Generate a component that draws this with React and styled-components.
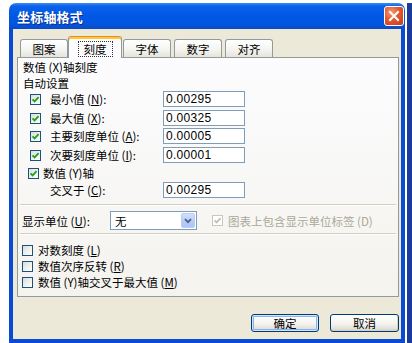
import React from 'react';
import styled, { createGlobalStyle } from 'styled-components';

const GlobalStyle = createGlobalStyle`
  html, body { margin: 0; padding: 0; background: #fff; }
  body {
    font-family: "Noto Sans CJK SC", "Liberation Sans", sans-serif;
    font-size: 11.5px;
    color: #000;
  }
  #root { width: 412px; height: 343px; overflow: hidden; }
`;

const Page = styled.div`
  display: flex;
  width: 412px;
  height: 343px;
  box-sizing: border-box;
  padding: 3px 0 0 9px;
  background: #fff;
`;

const Backdrop = styled.div`
  flex: 1;
  border-left: 2px solid #fff;
  background: #1a3b9b;
`;

const Window = styled.div`
  width: 396px;
  height: 340px;
  display: flex;
  flex-direction: column;
`;

const TitleBar = styled.div`
  height: 26px;
  flex: none;
  display: flex;
  align-items: center;
  justify-content: space-between;
  padding: 0 1px 0 8px;
  border-radius: 7px 7px 0 0;
  background: linear-gradient(
    to bottom,
    #3d8cf5 0%,
    #0b62ea 12%,
    #0058e6 45%,
    #0256df 80%,
    #0a4bc6 100%
  );
`;

const Title = styled.span`
  color: #fff;
  font-size: 13px;
  font-weight: 700;
  letter-spacing: 0.2px;
  text-shadow: 1px 1px 0 #0b2f8c;
`;

const CloseButton = styled.div`
  width: 20px;
  height: 20px;
  box-sizing: border-box;
  border: 1px solid #fff;
  border-radius: 3px;
  background: radial-gradient(circle at 35% 30%, #f09a78 0%, #e1592f 45%, #c5381a 100%);
  display: flex;
  align-items: center;
  justify-content: center;
`;

const Body = styled.div`
  flex: 1;
  display: flex;
  flex-direction: column;
  background: #ece9d8;
  border: 4px solid #0a4bd6;
  border-top: 0;
  padding: 7px 2px 0 4px;
`;

const TabStrip = styled.div`
  height: 21px;
  display: flex;
  align-items: flex-end;
  padding-left: 3px;
`;

const Tab = styled.div`
  position: relative;
  box-sizing: border-box;
  width: ${p => (p.$active ? 54 : 48)}px;
  height: ${p => (p.$active ? 22 : 18)}px;
  margin: ${p => (p.$active ? '0 1px -1px -3px' : '0 3px 0 0')};
  z-index: ${p => (p.$active ? 2 : 1)};
  border: 1px solid #919b9c;
  border-bottom: 0;
  border-top: 1px solid ${p => (p.$active ? '#e68b2c' : '#919b9c')};
  border-radius: 3px 3px 0 0;
  background: ${p =>
    p.$active ? '#fcfcfe' : 'linear-gradient(to bottom, #ffffff 0%, #f3f3ef 60%, #e6e4da 100%)'};
  box-shadow: ${p => (p.$active ? 'inset 0 2px 0 #ffc83c' : 'none')};
  display: flex;
  align-items: center;
  justify-content: center;
  padding-top: ${p => (p.$active ? 2 : 1)}px;
`;

const FocusLabel = styled.span`
  outline: 1px dotted #333;
  outline-offset: 0;
  padding: 0 5px;
  line-height: 14px;
`;

const Panel = styled.div`
  height: 240px;
  box-sizing: border-box;
  border: 1px solid #919b9c;
  background: linear-gradient(to bottom, #fcfcfe 0%, #f4f3ee 100%);
  padding: 1px 2px 0 4px;
  display: flex;
  flex-direction: column;
`;

const Heading = styled.div`
  line-height: 16px;
  height: 16px;
  padding-left: 1px;
`;

const FieldRow = styled.div`
  display: grid;
  grid-template-columns: 28px 113px 82px;
  align-items: center;
  height: 16px;
  margin-top: ${p => p.$gap || 0}px;
`;

const CheckCell = styled.div`
  justify-self: end;
  margin-right: 9px;
  display: flex;
`;

const Label = styled.span`
  line-height: 16px;
  white-space: nowrap;
  color: ${p => (p.$disabled ? '#aca899' : '#000')};
`;

const Key = styled.span`
  text-decoration: underline;
`;

const TextBox = styled.div`
  box-sizing: border-box;
  width: 82px;
  height: 16px;
  border: 1px solid #7f9db9;
  background: #fff;
  padding-left: 2px;
  font-family: "Liberation Sans", sans-serif;
  font-size: 12px;
  line-height: 14px;
  letter-spacing: 0.3px;
`;

const CheckLine = styled.div`
  display: flex;
  align-items: center;
  gap: ${p => p.$gap}px;
  height: 16px;
  padding-left: ${p => p.$indent}px;
  margin-top: ${p => p.$top || 0}px;
`;

const Box = styled.span`
  flex: none;
  box-sizing: border-box;
  width: 11px;
  height: 11px;
  border: 1px solid ${p => (p.$disabled ? '#cac8bb' : '#1c5180')};
  background: ${p => (p.$disabled ? '#fff' : 'linear-gradient(135deg, #dcdcd7 0%, #f6f6f3 70%, #ffffff 100%)')};
  display: flex;
  align-items: center;
  justify-content: center;
`;

const Separator = styled.div`
  height: 0;
  border-top: 1px solid #d0d0bf;
  border-bottom: 1px solid #fff;
  margin: ${p => p.$top}px 0 0 -2px;
`;

const UnitRow = styled.div`
  display: flex;
  align-items: center;
  height: 19px;
  margin-top: 5px;
`;

const UnitLabel = styled(Label)`
  width: 88px;
`;

const Select = styled.div`
  box-sizing: border-box;
  width: 87px;
  height: 19px;
  border: 1px solid #7f9db9;
  background: #fff;
  display: flex;
  align-items: center;
  justify-content: space-between;
  padding: 1px 1px 1px 4px;
  margin-right: 15px;
`;

const DropButton = styled.span`
  box-sizing: border-box;
  width: 14px;
  height: 15px;
  border: 1px solid #b9cdf6;
  border-radius: 2px;
  background: linear-gradient(to bottom, #d2e0fd 0%, #b9cdf8 50%, #aec4f6 100%);
  display: flex;
  align-items: center;
  justify-content: center;
`;

const OptionList = styled.div`
  display: flex;
  flex-direction: column;
  margin-top: 7px;
`;

const Footer = styled.div`
  display: flex;
  justify-content: flex-end;
  gap: 11px;
  margin-top: 17px;
`;

const Button = styled.div`
  box-sizing: border-box;
  width: ${p => p.$w}px;
  height: 18px;
  border: 1px solid #003c74;
  border-radius: 3px;
  background: linear-gradient(to bottom, #ffffff 0%, #f4f3ee 55%, #e3e0d6 85%, #d6d0c5 100%);
  box-shadow: ${p =>
    p.$default ? 'inset 0 0 0 1px #cee7ff, inset 0 0 0 2px #8fb0ec' : 'inset -1px -1px 0 #d6d0c5'};
  display: flex;
  align-items: center;
  justify-content: center;
  line-height: 16px;
`;

const Check = ({ color = '#21a121' }) => (
  <svg width="9" height="9" viewBox="0 0 9 9">
    <path d="M1.5 4.3 L3.6 6.4 L7.6 2.2" fill="none" stroke={color} strokeWidth="1.8" />
  </svg>
);

const CheckBox = ({ checked, disabled }) => (
  <Box $disabled={disabled}>{checked && <Check color={disabled ? '#c2c0b2' : '#21a121'} />}</Box>
);

const fields = [
  { label: '最小值', key: 'N', value: '0.00295', gap: 0 },
  { label: '最大值', key: 'X', value: '0.00325', gap: 3 },
  { label: '主要刻度单位', key: 'A', value: '0.00005', gap: 2 },
  { label: '次要刻度单位', key: 'I', value: '0.00001', gap: 3 },
];

const options = [
  { text: '对数刻度', key: 'L' },
  { text: '数值次序反转', key: 'R' },
  { text: '数值 (Y)轴交叉于最大值', key: 'M' },
];

const tabs = ['图案', '刻度', '字体', '数字', '对齐'];

export default function App() {
  return (
    <>
      <GlobalStyle />
      <Page>
        <Window>
          <TitleBar>
            <Title>坐标轴格式</Title>
            <CloseButton>
              <svg width="12" height="12" viewBox="0 0 12 12">
                <path d="M2 2 L10 10 M10 2 L2 10" stroke="#fff" strokeWidth="2" strokeLinecap="square" />
              </svg>
            </CloseButton>
          </TitleBar>
          <Body>
            <TabStrip>
              {tabs.map(t =>
                t === '刻度' ? (
                  <Tab key={t} $active>
                    <FocusLabel>{t}</FocusLabel>
                  </Tab>
                ) : (
                  <Tab key={t}>{t}</Tab>
                )
              )}
            </TabStrip>
            <Panel>
              <Heading>数值 (X)轴刻度</Heading>
              <Heading>自动设置</Heading>
              {fields.map(f => (
                <FieldRow key={f.key} $gap={f.gap}>
                  <CheckCell>
                    <CheckBox checked />
                  </CheckCell>
                  <Label>
                    {f.label} (<Key>{f.key}</Key>):
                  </Label>
                  <TextBox>{f.value}</TextBox>
                </FieldRow>
              ))}
              <CheckLine $indent={6} $gap={4} $top={2}>
                <CheckBox checked />
                <Label>数值 (Y)轴</Label>
              </CheckLine>
              <FieldRow $gap={1}>
                <span />
                <Label>
                  交叉于 (<Key>C</Key>):
                </Label>
                <TextBox>0.00295</TextBox>
              </FieldRow>
              <Separator $top={6} />
              <UnitRow>
                <UnitLabel>
                  显示单位 (<Key>U</Key>):
                </UnitLabel>
                <Select>
                  <span>无</span>
                  <DropButton>
                    <svg width="8" height="6" viewBox="0 0 8 6">
                      <path d="M1 1.2 L4 4.2 L7 1.2" fill="none" stroke="#4d6185" strokeWidth="1.8" />
                    </svg>
                  </DropButton>
                </Select>
                <CheckBox checked disabled />
                <Label $disabled style={{ marginLeft: 5 }}>
                  图表上包含显示单位标签 (D)
                </Label>
              </UnitRow>
              <Separator $top={3} />
              <OptionList>
                {options.map(o => (
                  <CheckLine key={o.key} $indent={0} $gap={5}>
                    <CheckBox />
                    <Label>
                      {o.text} (<Key>{o.key}</Key>)
                    </Label>
                  </CheckLine>
                ))}
              </OptionList>
            </Panel>
            <Footer>
              <Button $w={68} $default>
                确定
              </Button>
              <Button $w={69}>取消</Button>
            </Footer>
          </Body>
        </Window>
        <Backdrop />
      </Page>
    </>
  );
}
